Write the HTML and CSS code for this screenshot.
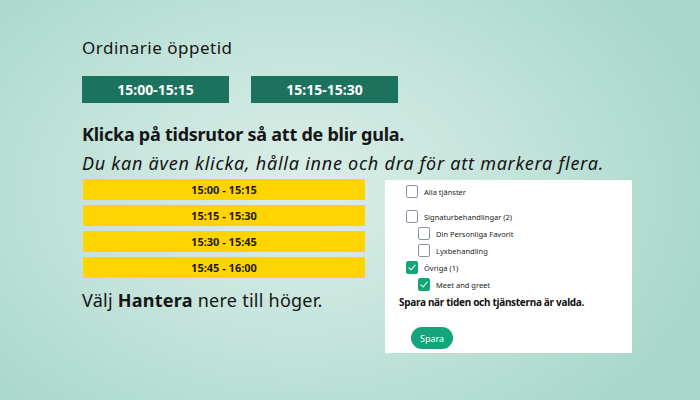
FILE: index.html
```html
<!DOCTYPE html>
<html lang="sv">
<head>
    <meta charset="UTF-8">
    <meta name="viewport" content="width=device-width, initial-scale=1.0">
    <title>Öppettider</title>
    <link rel="stylesheet" href="styles.css">
</head>
<body>
    <main class="sida">
        <h2 class="rubrik">Ordinarie öppetid</h2>

        <div class="ordinarie">
            <button class="tid">15:00-15:15</button>
            <button class="tid">15:15-15:30</button>
        </div>

        <p class="instruktion">Klicka på tidsrutor så att de blir gula.</p>
        <p class="tips">Du kan även klicka, hålla inne och dra för att markera flera.</p>

        <div class="rad">
            <div class="vanster">
                <div class="rutor">
                    <div class="ruta">15:00 - 15:15</div>
                    <div class="ruta">15:15 - 15:30</div>
                    <div class="ruta">15:30 - 15:45</div>
                    <div class="ruta">15:45 - 16:00</div>
                </div>
                <p class="hantera">Välj <b>Hantera</b> nere till höger.</p>
            </div>

            <div class="tjanster">
                <label class="val"><span class="box"></span>Alla tjänster</label>
                <label class="val grupp"><span class="box"></span>Signaturbehandlingar (2)</label>
                <label class="val under"><span class="box"></span>Din Personliga Favorit</label>
                <label class="val under"><span class="box"></span>Lyxbehandling</label>
                <label class="val"><span class="box vald"></span>Övriga (1)</label>
                <label class="val under"><span class="box vald"></span>Meet and greet</label>
                <p class="spara-text">Spara när tiden och tjänsterna är valda.</p>
                <button class="spara">Spara</button>
            </div>
        </div>
    </main>
</body>
</html>
```

FILE: styles.css
```css
html, body {
    height: 100%;
}

body {
    margin: 0;
    font-family: "Noto Sans", sans-serif;
    color: #151515;
    background: radial-gradient(ellipse 420px 300px at 300px 190px, #dbeee8 0%, #c4e4db 50%, #a9d8cb 100%);
}

.sida {
    padding: 36px 0 0 82px;
}

.rubrik {
    margin: 0;
    font-size: 17px;
    font-weight: normal;
    line-height: 24px;
    letter-spacing: 0.5px;
}

.ordinarie {
    display: flex;
    gap: 22px;
    margin-top: 16px;
}

.tid {
    width: 147px;
    height: 27px;
    border: none;
    background-color: #1b735e;
    color: white;
    font-family: inherit;
    font-size: 14px;
    font-weight: bold;
}

.instruktion {
    margin: 19px 0 0;
    font-size: 18px;
    font-weight: bold;
    line-height: 24px;
    letter-spacing: -0.25px;
}

.tips {
    margin: 5px 0 0;
    font-size: 18px;
    font-style: italic;
    line-height: 24px;
    letter-spacing: 0.75px;
}

.rad {
    display: flex;
    gap: 20px;
    margin-top: 4px;
}

.vanster {
    width: 283px;
}

.rutor {
    display: flex;
    flex-direction: column;
    gap: 5px;
    padding-left: 1px;
}

.ruta {
    height: 21px;
    line-height: 21px;
    background-color: #ffd400;
    border-radius: 1px;
    text-align: center;
    font-size: 11px;
    font-weight: bold;
    color: #1e1a10;
}

.hantera {
    margin: 10px 0 0;
    font-size: 18px;
    line-height: 24px;
    letter-spacing: 0.25px;
}

.tjanster {
    width: 247px;
    height: 173px;
    margin-top: 1px;
    box-sizing: border-box;
    padding: 5px 14px 0 21px;
    background-color: white;
}

.val {
    display: flex;
    align-items: center;
    gap: 6px;
    height: 13px;
    margin-bottom: 4px;
    font-size: 7.5px;
    color: #222;
}

.val.grupp {
    margin-top: 12px;
}

.val.under {
    padding-left: 12px;
}

.box {
    width: 10px;
    height: 11px;
    border: 1px solid #8a93a3;
    border-radius: 2px;
    flex-shrink: 0;
}

.box.vald {
    border-color: #14a47a;
    background-color: #14a47a;
    position: relative;
}

.box.vald::after {
    content: "";
    position: absolute;
    left: 3px;
    top: 1px;
    width: 3px;
    height: 6px;
    border: solid white;
    border-width: 0 1px 1px 0;
    transform: rotate(40deg);
}

.spara-text {
    margin: 2px 0 0 -7px;
    font-size: 10px;
    font-weight: bold;
    color: #111;
    letter-spacing: -0.3px;
}

.spara {
    margin: 18px 0 0 5px;
    width: 42px;
    height: 22px;
    border: none;
    border-radius: 11px;
    background-color: #14a47a;
    color: white;
    font-family: inherit;
    font-size: 9px;
}
```
